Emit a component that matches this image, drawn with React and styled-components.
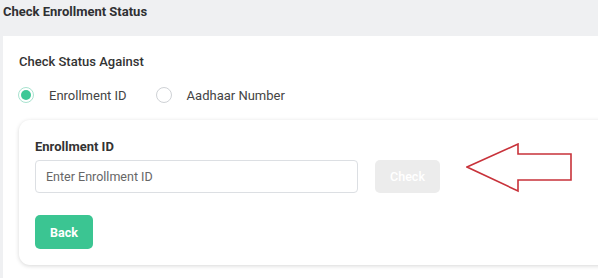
import React, { useState } from 'react';
import styled, { createGlobalStyle } from 'styled-components';

const GlobalStyle = createGlobalStyle`
	body {
		margin: 0;
		background: #ffffff;
		font-family: Roboto, 'Noto Sans', sans-serif;
		color: #333;
	}
`;

const Page = styled.div`
	width: 598px;
	height: 278px;
	overflow: hidden;
	background: #eff0f2;
	display: flex;
	flex-direction: column;
`;

const Header = styled.div`
	height: 36px;
	padding: 2px 0 0 3px;
	box-sizing: border-box;
	font-size: 13px;
	font-weight: 700;
	color: #2f3033;
	line-height: 20px;
`;

const Panel = styled.div`
	flex: 1;
	margin-left: 3px;
	background: #ffffff;
	padding: 17px 0 0 16px;
`;

const SectionTitle = styled.div`
	font-size: 13px;
	font-weight: 500;
	color: #333;
	line-height: 18px;
`;

const RadioRow = styled.div`
	display: flex;
	align-items: center;
	margin-top: 14px;
	height: 20px;
`;

const RadioOption = styled.label`
	display: flex;
	align-items: center;
	gap: 15px;
	font-size: 13px;
	color: #444;
	margin-right: 30px;
	cursor: pointer;
`;

const RadioCircle = styled.span`
	width: 16px;
	height: 16px;
	border-radius: 50%;
	box-sizing: border-box;
	border: 1.5px solid ${(p) => (p.checked ? '#a8e3cf' : '#cfd2d6')};
	display: flex;
	align-items: center;
	justify-content: center;
	margin-left: -1px;

	&::after {
		content: '';
		width: 10px;
		height: 10px;
		border-radius: 50%;
		background: ${(p) => (p.checked ? '#3ec896' : 'transparent')};
	}
`;

const Card = styled.div`
	margin-top: 15px;
	margin-right: -20px;
	border-radius: 11px;
	background: #fff;
	box-shadow: 0 1px 4px rgba(0, 0, 0, 0.16);
	height: 145px;
	padding: 19px 0 0 16px;
	box-sizing: border-box;
	display: flex;
	flex-direction: column;
`;

const FieldLabel = styled.div`
	font-size: 13px;
	font-weight: 700;
	color: #333;
	line-height: 16px;
`;

const FieldRow = styled.div`
	display: flex;
	align-items: flex-start;
	margin-top: 5px;
	height: 33px;
`;

const Input = styled.input`
	width: 323px;
	height: 33px;
	box-sizing: border-box;
	border: 1px solid #dcdfe3;
	border-radius: 4px;
	padding: 0 10px;
	font-family: Roboto, sans-serif;
	font-size: 12.5px;
	color: #333;
	outline: none;

	&::placeholder {
		color: #666;
	}
`;

const Button = styled.button`
	height: ${(p) => (p.tall ? '34px' : '33px')};
	padding: 0 ${(p) => (p.tall ? '15px' : '16px')};
	border: none;
	border-radius: 5px;
	font-family: Roboto, sans-serif;
	font-size: 12.5px;
	font-weight: ${(p) => (p.primary ? 700 : 500)};
	color: #fff;
	background: ${(p) => (p.primary ? '#3bc592' : '#ececec')};
	cursor: ${(p) => (p.disabled ? 'default' : 'pointer')};
`;

const CheckButton = styled(Button)`
	margin-left: 17px;
	width: 65px;
	padding: 0;
`;

/* annotation arrow, sits above the row's top edge */
const ArrowWrap = styled.div`
	margin-left: 26px;
	margin-top: -17px;
	display: flex;
`;

const Actions = styled.div`
	margin-top: 22px;
	display: flex;
`;

const Arrow = () => (
	<svg width="108" height="52" viewBox="0 0 108 52">
		<path
			d="M1 24 L52 1 L52 11 L105 11 L105 37 L52 37 L52 48 Z"
			fill="none"
			stroke="#c8323a"
			strokeWidth="1.6"
			strokeLinejoin="miter"
		/>
	</svg>
);

const App = () => {
	const [mode, setMode] = useState('enrollment');
	const options = [
		{ id: 'enrollment', label: 'Enrollment ID' },
		{ id: 'aadhaar', label: 'Aadhaar Number' },
	];

	return (
		<>
			<GlobalStyle />
			<Page>
				<Header>Check Enrollment Status</Header>
				<Panel>
					<SectionTitle>Check Status Against</SectionTitle>
					<RadioRow>
						{options.map((opt) => (
							<RadioOption key={opt.id} onClick={() => setMode(opt.id)}>
								<RadioCircle checked={mode === opt.id} />
								{opt.label}
							</RadioOption>
						))}
					</RadioRow>
					<Card>
						<FieldLabel>Enrollment ID</FieldLabel>
						<FieldRow>
							<Input placeholder="Enter Enrollment ID" />
							<CheckButton disabled>Check</CheckButton>
							<ArrowWrap>
								<Arrow />
							</ArrowWrap>
						</FieldRow>
						<Actions>
							<Button primary tall>Back</Button>
						</Actions>
					</Card>
				</Panel>
			</Page>
		</>
	);
};

export default App;
